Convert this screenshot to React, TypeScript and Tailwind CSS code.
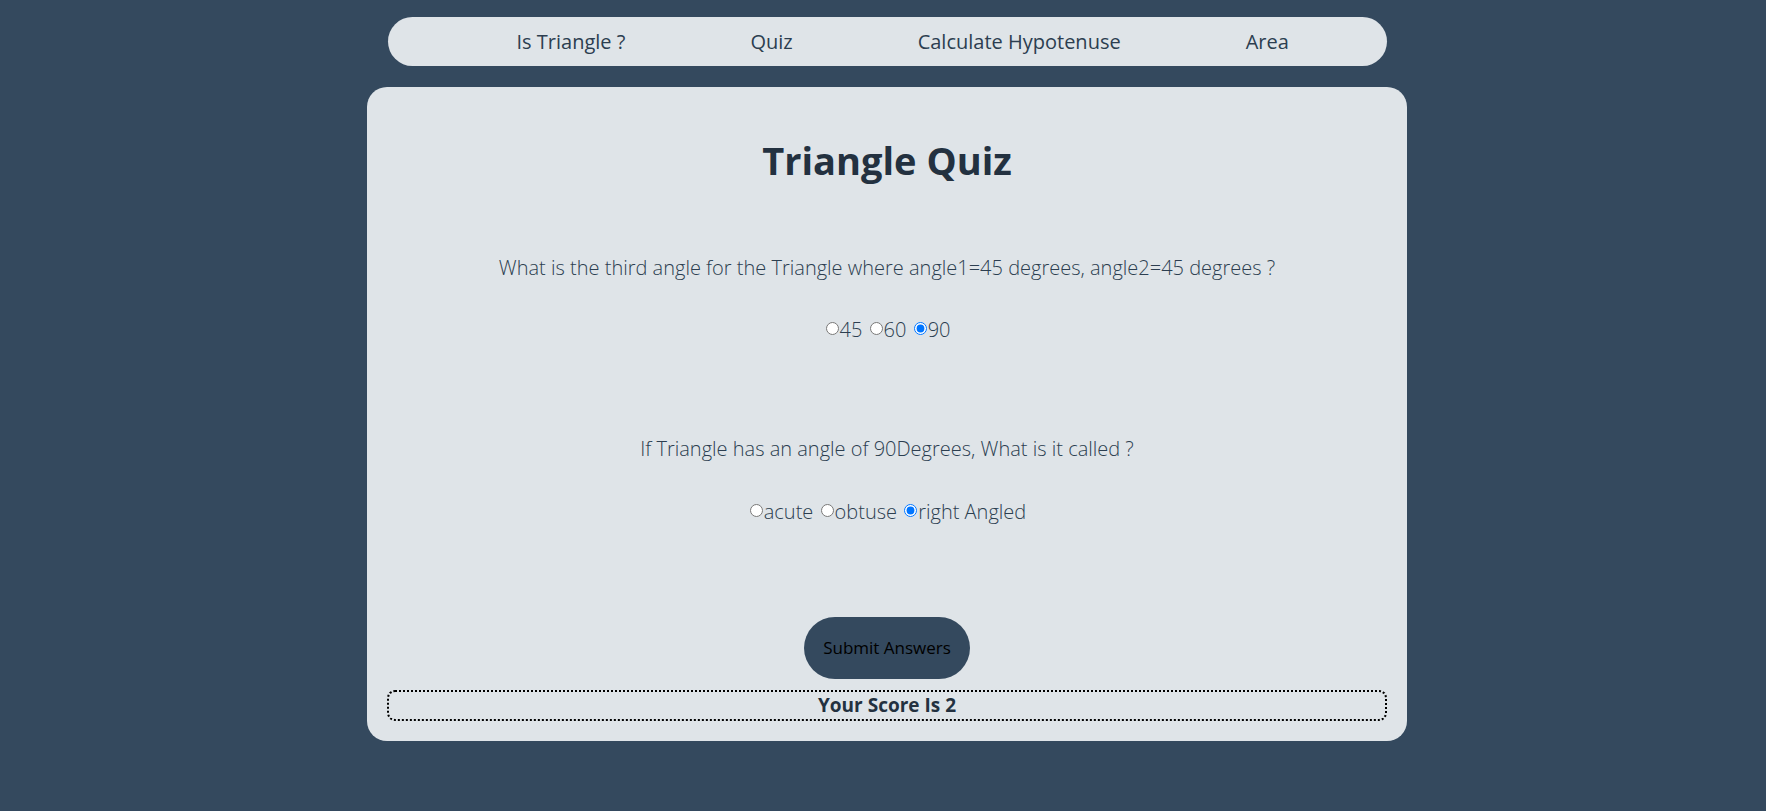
import React, { useState } from 'react';

const navItems = ['Is Triangle ?', 'Quiz', 'Calculate Hypotenuse', 'Area'];

const App: React.FC = () => {
  const [q1, setQ1] = useState('90');
  const [q2, setQ2] = useState('right Angled');

  const font = { fontFamily: '"Open Sans", "Noto Sans", sans-serif' };

  return (
    <div className="min-h-[811px] w-full bg-[#34495e] pt-[17px] pl-[8px]" style={font}>
      <nav className="mx-auto flex h-[49px] w-[999px] items-center gap-[125px] rounded-full bg-[#dfe4e8] pl-[129px] text-[20px] text-[#2c3e50]">
        {navItems.map((item) => (
          <a key={item} href="#" className="whitespace-nowrap">
            {item}
          </a>
        ))}
      </nav>

      <main className="mx-auto mt-[21px] flex w-[1040px] flex-col items-center rounded-[20px] bg-[#dfe4e8] px-[20px] pt-[49px] pb-[20px]">
        <h1 className="text-[38px] leading-[48px] font-bold text-[#233140]">Triangle Quiz</h1>

        <p className="mt-[70px] text-[20px] leading-[27px] font-light text-[#2c3e50]">
          What is the third angle for the Triangle where angle1=45 degrees, angle2=45 degrees ?
        </p>
        <div className="mt-[35px] text-[20px] leading-[27px] font-light text-[#2c3e50]">
          {['45', '60', '90'].map((v, i) => (
            <React.Fragment key={v}>
              {i > 0 && ' '}
              <input
                type="radio"
                name="q1"
                value={v}
                checked={q1 === v}
                onChange={() => setQ1(v)}
                className="mr-[1px] ml-[2px] align-[2px]"
              />
              {v}
            </React.Fragment>
          ))}
        </div>

        <p className="mt-[92px] text-[20px] leading-[27px] font-light text-[#2c3e50]">
          If Triangle has an angle of 90Degrees, What is it called ?
        </p>
        <div className="mt-[36px] text-[20px] leading-[27px] font-light text-[#2c3e50]">
          {['acute', 'obtuse', 'right Angled'].map((v, i) => (
            <React.Fragment key={v}>
              {i > 0 && ' '}
              <input
                type="radio"
                name="q2"
                value={v}
                checked={q2 === v}
                onChange={() => setQ2(v)}
                className="mr-[1px] ml-[2px] align-[2px]"
              />
              {v}
            </React.Fragment>
          ))}
        </div>

        <button className="mt-[92px] h-[62px] w-[166px] rounded-full bg-[#34495e] text-[17px] text-black">
          Submit Answers
        </button>

        <div className="mt-[11px] flex h-[31px] w-full items-center justify-center rounded-[8px] border-2 border-dotted border-black text-[19px] font-bold text-[#233140]">
          Your Score Is 2
        </div>
      </main>
    </div>
  );
};

export default App;
